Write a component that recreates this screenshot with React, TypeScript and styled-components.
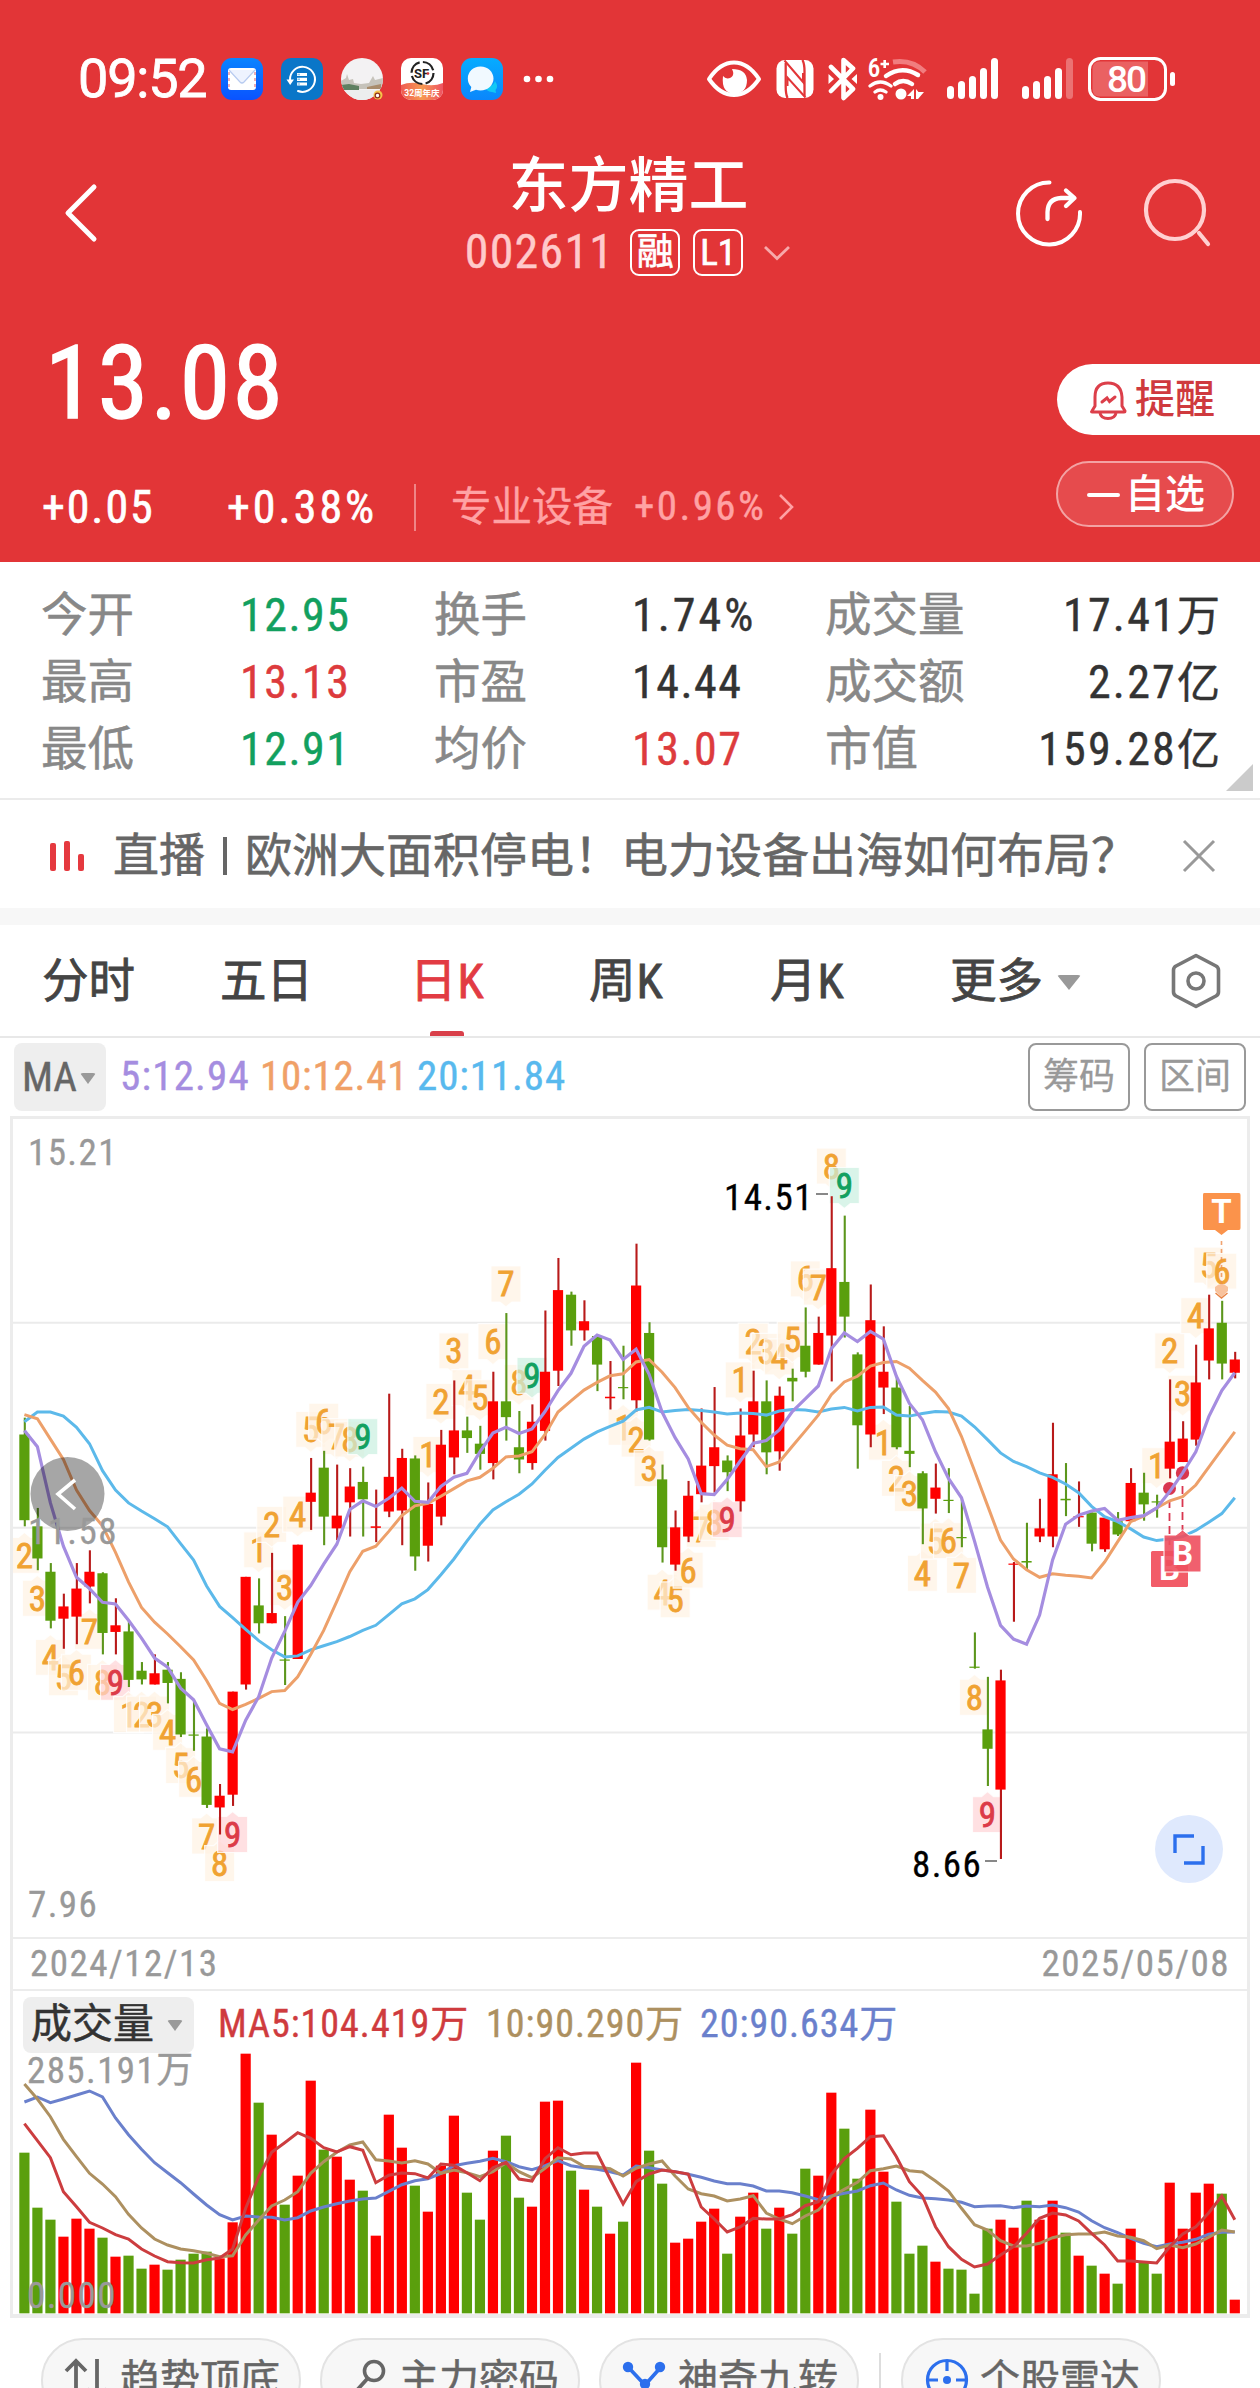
import React from "react";
import styled, { createGlobalStyle } from "styled-components";

const FONT = '"Roboto Condensed", Roboto, "Noto Sans CJK SC", sans-serif';
const RED = "#e23537";

const GlobalStyle = createGlobalStyle`
  * { box-sizing: border-box; }
  body { margin: 0; background: #fff; }
`;

const Screen = styled.div`
  width: 1260px;
  height: 2388px;
  overflow: hidden;
  background: #fff;
  color: #333;
  font-family: ${FONT};
  font-stretch: 75%;
  white-space: nowrap;
`;

/* ---------- shared text ---------- */
const Txt = styled.span<{
  $size: number;
  $color?: string;
  $ls?: number;
  $weight?: number;
  $stroke?: number;
  $ml?: number;
  $w?: number;
}>`
  font-size: ${(p) => p.$size}px;
  line-height: 1.1;
  color: ${(p) => p.$color ?? "inherit"};
  letter-spacing: ${(p) => p.$ls ?? 0}px;
  font-weight: ${(p) => p.$weight ?? 400};
  -webkit-text-stroke: ${(p) => p.$stroke ?? 0}px currentColor;
  margin-left: ${(p) => p.$ml ?? 0}px;
  ${(p) => (p.$w ? `width: ${p.$w}px;` : "")}
  flex: none;
`;

/* ---------- header ---------- */
const Header = styled.header`
  height: 562px;
  background: ${RED};
  color: #fff;
`;

const StatusBar = styled.div`
  height: 146px;
  padding: 12px 84px 0 78px;
  display: flex;
  align-items: center;
  justify-content: space-between;
`;

const StatusGroup = styled.div<{ $gap: number }>`
  display: flex;
  align-items: center;
  gap: ${(p) => p.$gap}px;
`;

const Clock = styled.span`
  font: 400 54px/64px Roboto, sans-serif;
  font-stretch: 100%;
  width: 125px;
  letter-spacing: -1.2px;
  -webkit-text-stroke: 0.8px #fff;
`;

const AppIcon = styled.svg`
  width: 42px;
  height: 42px;
  display: block;
`;

const StatusText = styled.text<{ $size: number; $weight: number }>`
  font-family: Roboto, "Noto Sans CJK SC", sans-serif;
  font-size: ${(p) => p.$size}px;
  font-weight: ${(p) => p.$weight};
  font-stretch: 100%;
`;

const NavBar = styled.nav`
  height: 134px;
  padding: 0 48px 0 62px;
  display: grid;
  grid-template-columns: 242px 1fr 256px;
  align-items: center;
`;

const TitleColumn = styled.div`
  height: 134px;
  display: flex;
  flex-direction: column;
  align-items: center;
  padding-top: 8px;
`;

const Title = styled.h1`
  margin: 0 0 9px 0;
  font-size: 60px;
  line-height: 66px;
  font-weight: 500;
  padding-right: 3px;
`;

const SubTitle = styled.div`
  height: 47px;
  display: flex;
  align-items: center;
  padding-right: 4px;
`;

const Tag = styled.span<{ $ml: number }>`
  width: 50px;
  height: 47px;
  margin-left: ${(p) => p.$ml}px;
  border: 2.5px solid #fff;
  border-radius: 9px;
  display: flex;
  align-items: center;
  justify-content: center;
  font-size: 37px;
  line-height: 1;
  -webkit-text-stroke: 0.7px currentColor;
`;

const NavActions = styled.div`
  display: flex;
  justify-content: flex-end;
  gap: 58px;
`;

const Quote = styled.div`
  height: 282px;
  display: flex;
  justify-content: space-between;
`;

const QuoteLeft = styled.div`
  padding: 53px 0 0 42px;
`;

const Price = styled.div`
  height: 100px;
  padding-left: 3px;
  font-size: 102px;
  line-height: 101px;
  letter-spacing: 2.4px;
  -webkit-text-stroke: 1.6px #fff;
`;

const ChangeRow = styled.div`
  height: 48px;
  margin-top: 50px;
  display: flex;
  align-items: center;
`;

const Divider = styled.i<{ $h: number; $color: string; $ml: number; $mr: number; $w?: number }>`
  width: ${(p) => p.$w ?? 2}px;
  height: ${(p) => p.$h}px;
  background: ${(p) => p.$color};
  margin-left: ${(p) => p.$ml}px;
  margin-right: ${(p) => p.$mr}px;
  flex: none;
`;

const QuoteRight = styled.div`
  padding-top: 84px;
  display: flex;
  flex-direction: column;
  align-items: flex-end;
  gap: 26px;
`;

const RemindPill = styled.button`
  width: 203px;
  height: 71px;
  padding: 0 0 0 32px;
  border: 0;
  border-radius: 36px 0 0 36px;
  background: #fff;
  color: #cf3a3e;
  display: flex;
  align-items: center;
  gap: 8px;
  font: 500 40px/1.1 ${FONT};
`;

const WatchPill = styled.button`
  width: 178px;
  height: 66px;
  margin-right: 26px;
  padding: 2px 0 0 29px;
  border: 2px solid #f3a3a4;
  border-radius: 33px;
  background: #e64b4d;
  color: #fff;
  display: flex;
  align-items: center;
  gap: 5px;
  font: 500 40px/1.1 ${FONT};
`;

const Dash = styled.i`
  width: 33px;
  height: 4px;
  border-radius: 2px;
  background: #fff;
`;

/* ---------- stats ---------- */
const Stats = styled.section`
  position: relative;
  height: 238px;
  padding: 20px 40px 0 41px;
  border-bottom: 2px solid #ebebeb;
  display: grid;
  grid-template-columns: 199px 194px 198px 193px 145px 1fr;
  grid-auto-rows: 67px;
  align-items: center;
`;

const StatLabel = styled.span`
  font-size: 46.5px;
  line-height: 67px;
  color: #888;
  -webkit-text-stroke: 0.5px currentColor;
`;

const StatValue = styled.span<{ $color?: string; $right?: boolean; $ls?: number }>`
  font-size: 46px;
  line-height: 67px;
  letter-spacing: ${(p) => p.$ls ?? 1.5}px;
  color: ${(p) => p.$color ?? "#333"};
  text-align: ${(p) => (p.$right ? "right" : "left")};
  -webkit-text-stroke: 0.4px currentColor;
`;

const Unit = styled.span`
  font-size: 43px;
  letter-spacing: 0;
`;

const Corner = styled.i`
  position: absolute;
  right: 7px;
  bottom: 7px;
  border-left: 27px solid transparent;
  border-bottom: 27px solid #cbcbcb;
`;

/* ---------- notice ---------- */
const Notice = styled.section`
  height: 125px;
  padding: 3px 44px 0 50px;
  border-bottom: 17px solid #f7f7f7;
  display: flex;
  align-items: center;
  color: #666;
`;

const Bars = styled.div`
  width: 63px;
  height: 30px;
  display: flex;
  align-items: flex-end;
  gap: 8px;
`;

const Bar = styled.i<{ $h: number }>`
  width: 6px;
  height: ${(p) => p.$h}px;
  border-radius: 2px;
  background: #e5393f;
`;

const Grow = styled.i`
  flex: 1;
`;

/* ---------- tabs ---------- */
const Tabs = styled.nav`
  height: 113px;
  border-bottom: 2px solid #e8e8e8;
  padding: 0 39px 0 42px;
  display: grid;
  grid-template-columns: 178px 190px 179px 181px 180px 1fr 50px;
  align-items: center;
`;

const Tab = styled.div<{ $active?: boolean }>`
  position: relative;
  height: 111px;
  width: max-content;
  display: flex;
  align-items: center;
  padding-top: 3px;
  font-size: 46.5px;
  line-height: 1.1;
  color: ${(p) => (p.$active ? "#e23b43" : "#444")};
  -webkit-text-stroke: 0.8px currentColor;
  &::after {
    content: "";
    display: ${(p) => (p.$active ? "block" : "none")};
    position: absolute;
    left: 50%;
    bottom: 0;
    width: 34px;
    height: 5px;
    margin-left: -17px;
    border-radius: 3px 3px 0 0;
    background: #d9404a;
  }
`;

const Kay = styled.span`
  margin-left: 1px;
  font-size: 48px;
  letter-spacing: 1px;
`;

const Caret = styled.i<{ $w: number; $h: number; $ml: number }>`
  border-left: ${(p) => p.$w / 2}px solid transparent;
  border-right: ${(p) => p.$w / 2}px solid transparent;
  border-top: ${(p) => p.$h}px solid #999;
  border-radius: 3px;
  margin-left: ${(p) => p.$ml}px;
`;

/* ---------- indicator row ---------- */
const IndicatorRow = styled.div`
  height: 78px;
  padding: 5px 14px 5px 14px;
  display: flex;
  align-items: center;
`;

const MaPicker = styled.div`
  width: 92px;
  height: 68px;
  padding: 2px 0 0 8px;
  border-radius: 8px;
  background: #eee;
  color: #666;
  display: flex;
  align-items: center;
`;

const OutlineButton = styled.button`
  width: 102px;
  height: 68px;
  margin-left: 14px;
  padding: 2px 0 0;
  border: 2px solid #999;
  border-radius: 8px;
  background: #fff;
  color: #999;
  font: 400 36px/1.1 ${FONT};
  -webkit-text-stroke: 0.3px currentColor;
`;

/* ---------- chart panels ---------- */
const Panel = styled.section`
  width: 1240px;
  margin-left: 10px;
  border: 3px solid #ececec;
  border-bottom-width: 4px;
`;

const ChartSvg = styled.svg`
  display: block;
  width: 1234px;
`;

const DateRow = styled.div`
  height: 54px;
  padding: 0 17px 0 17px;
  border-top: 2px solid #ececec;
  border-bottom: 2px solid #ececec;
  display: flex;
  align-items: center;
  justify-content: space-between;
  color: #999;
`;

const VolumeHeader = styled.div`
  height: 62px;
  padding: 6px 0 0 10px;
  display: flex;
  align-items: center;
`;

const VolumePicker = styled.div`
  width: 171px;
  height: 56px;
  margin-right: 24px;
  padding-left: 8px;
  border-radius: 8px;
  background: #eee;
  display: flex;
  align-items: center;
`;

/* ---------- bottom tools ---------- */
const Tools = styled.div`
  display: flex;
  align-items: flex-start;
  padding: 20px 0 0 41px;
  height: 110px;
`;

const Tool = styled.div<{ $ml: number }>`
  width: 260px;
  height: 84px;
  margin-left: ${(p) => p.$ml}px;
  padding-left: 21px;
  border: 2px solid #e3e3e3;
  border-radius: 42px;
  background: #f7f7f7;
  color: #666;
  display: flex;
  align-items: center;
  gap: 10px;
  flex: none;
`;

/* ---------- data ---------- */
type Dir = "R" | "G";
type Candle = [Dir, number, number, number, number];

/* colour, high, top of body, bottom of body, low */
const CANDLES: Candle[] = [
  ["G", 603, 636, 804, 816], ["G", 780, 816, 879, 902], ["G", 888, 905, 1001, 1016], ["R", 948, 973, 997, 1056],
  ["R", 888, 938, 993, 1047], ["R", 863, 905, 934, 967], ["G", 906, 908, 1025, 1067], ["R", 957, 1010, 1023, 1067],
  ["G", 1001, 1022, 1117, 1131], ["G", 1082, 1099, 1116, 1126], ["R", 1067, 1104, 1126, 1126], ["G", 1082, 1097, 1123, 1163],
  ["G", 1102, 1115, 1224, 1229], ["G", 1156, 1224, 1226, 1256], ["G", 1212, 1228, 1362, 1368], ["R", 1321, 1344, 1367, 1420],
  ["R", 1140, 1140, 1342, 1364], ["R", 915, 915, 1126, 1136], ["G", 918, 971, 1006, 1026], ["R", 868, 986, 1006, 1006],
  ["G", 992, 1077, 1079, 1127], ["R", 852, 852, 1076, 1076], ["R", 682, 750, 768, 823], ["G", 668, 701, 797, 853],
  ["R", 695, 795, 820, 843], ["R", 702, 738, 769, 836], ["G", 699, 729, 763, 836], ["R", 744, 816, 819, 847],
  ["R", 556, 719, 787, 798], ["R", 664, 682, 785, 853], ["G", 677, 683, 875, 903], ["R", 730, 772, 854, 885],
  ["R", 627, 656, 797, 814], ["R", 530, 628, 681, 714], ["G", 601, 628, 643, 672], ["G", 619, 654, 674, 705],
  ["R", 513, 571, 692, 724], ["G", 398, 571, 602, 648], ["G", 590, 661, 685, 712], ["R", 577, 611, 692, 705],
  ["R", 393, 513, 629, 648], ["R", 290, 353, 511, 541], ["G", 356, 362, 432, 462], ["R", 373, 414, 432, 452],
  ["G", 443, 443, 499, 551], ["R", 492, 562, 565, 587], ["G", 462, 543, 545, 567], ["R", 262, 344, 569, 591],
  ["G", 416, 437, 646, 648], ["G", 695, 724, 857, 887], ["R", 785, 818, 891, 903], ["R", 727, 756, 836, 847],
  ["R", 585, 697, 753, 769], ["R", 543, 661, 698, 750], ["G", 677, 687, 710, 747], ["R", 585, 638, 767, 787],
  ["R", 511, 571, 636, 661], ["G", 530, 571, 671, 714], ["R", 542, 560, 669, 707], ["G", 507, 525, 532, 571],
  ["G", 387, 462, 513, 524], ["R", 405, 437, 499, 499], ["R", 169, 310, 442, 532], ["G", 207, 337, 405, 446],
  ["G", 475, 479, 618, 703], ["R", 342, 412, 636, 661], ["R", 424, 513, 544, 596], ["G", 522, 544, 661, 665],
  ["G", 580, 668, 674, 700], ["G", 708, 712, 781, 851], ["R", 693, 740, 762, 791], ["G", 702, 764, 766, 790],
  ["G", 762, 837, 839, 857], ["G", 1024, 1091, 1093, 1095], ["G", 1111, 1214, 1252, 1325], ["R", 1097, 1118, 1332, 1468],
  ["R", 886, 889, 891, 1003], ["G", 809, 884, 887, 901], ["R", 762, 820, 836, 847], ["R", 613, 714, 836, 857],
  ["G", 692, 762, 765, 796], ["R", 728, 796, 798, 817], ["G", 789, 789, 850, 865], ["R", 799, 799, 861, 866],
  ["G", 788, 806, 832, 835], ["R", 702, 731, 806, 806], ["G", 711, 750, 773, 805], ["G", 754, 767, 769, 799],
  ["R", 528, 650, 703, 722], ["R", 610, 644, 690, 690], ["R", 460, 534, 646, 658], ["R", 362, 428, 491, 528],
  ["G", 374, 417, 497, 528], ["R", 474, 489, 515, 526],
];

const MA5 = [628,660,770,855,916,938,965,968,1000,1035,1074,1092,1133,1156,1205,1252,1258,1196,1150,1074,1022,965,932,890,851,783,766,777,761,741,767,769,738,720,712,670,633,622,634,625,591,550,516,463,441,451,489,469,518,592,642,684,752,754,724,688,653,648,627,591,566,541,468,437,454,434,449,522,575,607,670,722,760,845,935,1010,1037,1047,990,882,812,794,786,781,804,799,795,780,748,711,670,601,550,515];
const MA10 = [597,605,645,685,745,785,815,867,925,975,1004,1027,1052,1078,1118,1163,1175,1165,1153,1140,1138,1111,1067,1020,963,905,865,855,826,795,776,771,757,742,727,720,702,680,678,670,636,592,570,549,534,521,517,494,489,514,544,583,612,637,657,664,666,699,690,659,629,598,558,533,522,502,495,493,506,530,553,585,640,707,775,843,880,901,916,909,912,914,917,886,846,807,796,780,766,758,735,700,665,631];
const MA20 = [611,592,592,600,622,654,707,745,770,786,801,817,850,882,933,973,995,1018,1040,1058,1072,1070,1058,1050,1042,1032,1020,1010,989,968,958,940,911,880,845,812,784,768,753,733,706,681,663,645,631,620,610,588,583,592,589,587,589,592,596,594,595,598,590,587,588,592,586,583,590,583,582,598,600,595,591,592,600,621,646,672,689,699,711,720,733,750,777,797,807,821,837,844,841,836,824,808,791,760];

const VOLUME = [758,923,959,1010,956,986,1013,1070,1067,1106,1094,1109,1079,1061,1055,1075,967,461,608,704,914,827,542,749,770,839,872,1007,644,743,857,935,797,647,878,959,752,707,893,920,605,602,812,869,920,1001,965,488,752,851,1028,1016,965,926,1061,950,878,986,923,1001,806,827,578,686,836,629,815,905,1061,1037,1085,1106,1109,1181,986,959,983,902,959,902,998,1067,1097,1121,1151,986,1088,1121,848,986,878,851,881,1199];
const VMA5 = [671,722,773,875,920,967,984,1004,1017,1047,1068,1085,1088,1089,1079,1074,1047,925,830,757,728,698,715,743,756,740,751,848,826,819,821,834,792,796,818,842,803,787,837,843,776,743,764,759,759,837,912,845,822,810,815,822,921,957,996,981,955,957,957,944,917,905,823,776,745,710,707,770,845,888,980,1040,1078,1101,1092,1065,1040,1000,955,939,945,963,1000,1035,1083,1083,1086,1089,1040,1002,980,938,888,959];
const VMA10 = [552,597,650,718,770,820,852,890,943,984,1017,1035,1047,1052,1060,1070,1067,1005,960,918,900,875,820,785,757,735,726,779,783,789,782,792,820,810,818,830,815,788,815,833,805,773,777,799,801,806,828,805,792,783,828,867,881,888,903,897,887,939,957,971,948,930,890,868,847,812,806,798,812,816,843,873,925,974,990,1022,1038,1038,1030,1013,1004,1002,1002,996,1008,1012,1022,1046,1035,1043,1032,1012,990,996];
const VMA20 = [606,591,608,597,585,573,591,654,704,748,788,818,848,882,915,944,960,948,951,952,960,953,933,921,911,903,897,894,874,854,842,836,820,797,790,784,775,785,800,809,797,782,797,803,808,815,825,798,803,810,815,823,832,843,851,851,858,873,873,878,888,899,888,880,873,857,849,870,886,894,896,900,907,920,918,917,923,918,920,915,923,936,962,983,998,1015,1030,1040,1032,1027,1018,1003,997,996];

/* index, digit, centre, whether it hangs below the candle */
const TURNS: [number, number, number, boolean][] = [
  [0, 2, 873, true], [1, 3, 957, true], [2, 4, 1073, true], [3, 5, 1113, true], [4, 6, 1102, true], [5, 7, 1022, true],
  [6, 8, 1122, true], [7, 9, 1122, true], [8, 1, 1185, true], [9, 2, 1184, true], [10, 3, 1184, true], [11, 4, 1220, true],
  [12, 5, 1285, true], [13, 6, 1312, true], [14, 7, 1423, true], [15, 8, 1477, true], [16, 9, 1420, true],
  [18, 1, 862, false], [19, 2, 812, false], [20, 3, 936, false], [21, 4, 792, false], [22, 5, 626, false],
  [23, 6, 610, false], [24, 7, 640, false], [25, 8, 645, false], [26, 9, 640, false],
  [31, 1, 675, false], [32, 2, 571, false], [33, 3, 472, false], [34, 4, 544, false], [35, 5, 564, false],
  [36, 6, 454, false], [37, 7, 341, false], [38, 8, 534, false], [39, 9, 520, false],
  [46, 1, 622, true], [47, 2, 645, true], [48, 3, 703, true], [49, 4, 945, true], [50, 5, 960, true],
  [51, 6, 902, true], [52, 7, 822, true], [53, 8, 808, true], [54, 9, 803, true],
  [55, 1, 529, false], [56, 2, 453, false], [57, 3, 473, false], [58, 4, 484, false], [59, 5, 450, false],
  [60, 6, 331, false], [61, 7, 347, false], [62, 8, 110, false], [63, 9, 148, false],
  [66, 1, 651, true], [67, 2, 722, true], [68, 3, 752, true], [69, 4, 908, true], [70, 5, 845, true],
  [71, 6, 844, true], [72, 7, 912, true], [73, 8, 1151, true], [74, 9, 1381, true],
  [87, 1, 697, false], [88, 2, 472, false], [89, 3, 555, false], [90, 4, 403, false], [91, 5, 304, false], [92, 6, 316, false],
];

const X = (i: number) => 24.4 + i * 13.015;
const PY = (v: number) => 1110 + v / 1.96;
const VY = (v: number) => 1900 + v / 3;
const points = (data: number[], y: (v: number) => number) =>
  data.map((v, i) => `${X(i).toFixed(1)},${y(v).toFixed(1)}`).join(" ");

const BODY = { R: "#ff0000", G: "#5a9f0d" };
const WICK = { R: "#b81a1a", G: "#5c961c" };

const AxisText = styled.text<{ $color?: string }>`
  font: 400 37px ${FONT};
  font-stretch: 75%;
  fill: ${(p) => p.$color ?? "#999"};
  stroke: ${(p) => p.$color ?? "#999"};
  stroke-width: 0.3px;
  letter-spacing: 1.4px;
`;

const TurnText = styled.text`
  font: 400 35px ${FONT};
  font-stretch: 75%;
  text-anchor: middle;
`;

const MarkText = styled.text`
  font: 700 33px Roboto, sans-serif;
  font-stretch: 100%;
  text-anchor: middle;
  fill: #fff;
`;

function Turn({ i, n, v, below }: { i: number; n: number; v: number; below: boolean }) {
  const x = X(i);
  const y = PY(v);
  const [fill, ink] = n === 9 ? (below ? ["#ffd3d6", "#dc3b48"] : ["#c9efdf", "#12a05f"]) : ["#fff2e2", "#f0a232"];
  const l = x - 15;
  const r = x + 15;
  const t = y - 18;
  const b = y + 18;
  const shape = below
    ? `M${l} ${t}H${x - 6}L${x} ${t - 5}L${x + 6} ${t}H${r}V${b}H${l}Z`
    : `M${l} ${t}H${r}V${b}H${x + 6}L${x} ${b + 5}L${x - 6} ${b}H${l}Z`;
  return (
    <g>
      <path d={shape} fill={fill} fillOpacity={0.7} stroke="#fff" strokeWidth={1.2} strokeOpacity={0.8} />
      <TurnText x={x} y={y + 12.5} fill={ink} stroke={ink} strokeWidth={0.8}>{n}</TurnText>
    </g>
  );
}

function PriceChart() {
  return (
    <ChartSvg height={818} viewBox="13 1119 1234 818">
      {[1322.8, 1527.8, 1732.6].map((y) => (
        <path key={y} d={`M13 ${y}H1247`} stroke="#ebebeb" strokeWidth={2} />
      ))}
      {TURNS.map(([i, n, v, below]) => (
        <Turn key={i} i={i} n={n} v={v} below={below} />
      ))}
      {CANDLES.map(([c, h, t, b, l], i) => (
        <g key={i}>
          <path d={`M${X(i) + 0.4} ${PY(h)}V${PY(l)}`} stroke={WICK[c]} strokeWidth={2.1} />
          <rect x={X(i) - 5.1} y={PY(t)} width={10.2} height={Math.max(1.2, (b - t) / 1.96)} fill={BODY[c]} />
        </g>
      ))}

      <g stroke="#d9364f" strokeWidth={1.8} strokeDasharray="8 5">
        <path d="M1169.5 1500V1545M1182.5 1486V1532" />
      </g>
      <path d="M1221.5 1241V1287" stroke="#ee8d4e" strokeWidth={1.6} strokeDasharray="4 4" strokeOpacity={0.8} />
      <path d="M1215 1287Q1221.5 1281 1228 1287V1291L1221.5 1297L1215 1291Z" fill="#f8c29c" />
      <path d="M1215.5 1293L1221.5 1298L1227.5 1293" fill="none" stroke="#e88547" strokeWidth={1.5} />
      <circle cx={1169.5} cy={1488.5} r={6.5} fill="#d9364f" />
      <circle cx={1182.5} cy={1473} r={6.7} fill="#d9364f" />

      <polyline points={points(MA20, PY)} fill="none" stroke="#5cb9ea" strokeWidth={3} />
      <polyline points={points(MA10, PY)} fill="none" stroke="#eda06a" strokeWidth={3} />
      <polyline points={points(MA5, PY)} fill="none" stroke="#a58de0" strokeWidth={3.2} />

      <path d="M1204 1193H1239Q1240.5 1193 1240.5 1195V1228Q1240.5 1230 1239 1230H1228L1221.5 1235L1215 1230H1204Q1203 1230 1203 1228V1195Q1203 1193 1204 1193Z" fill="#fb934b" />
      <MarkText x={1221.5} y={1223}>T</MarkText>
      <rect x={1151} y={1551} width={37} height={36} rx={1.5} fill="#f25c68" />
      <MarkText x={1169.5} y={1580}>B</MarkText>
      <path d="M1164 1535H1176L1182.5 1530L1189 1535H1201V1572H1164Z" fill="#ee4f5e" fillOpacity={0.9} stroke="#fff" strokeWidth={1} />
      <MarkText x={1182.5} y={1565}>B</MarkText>

      <circle cx={67.5} cy={1494} r={37} fill="#000" fillOpacity={0.35} />
      <path d="M75 1480L58 1494L75 1509" fill="none" stroke="#fff" strokeWidth={3.6} />
      <AxisText x={28} y={1165}>15.21</AxisText>
      <AxisText x={28} y={1544}>11.58</AxisText>
      <AxisText x={28} y={1916.5}>7.96</AxisText>
      <AxisText x={724} y={1210} $color="#000">14.51</AxisText>
      <path d="M816 1194H828M985 1861H997" stroke="#888" strokeWidth={2} />
      <AxisText x={912} y={1876.5} $color="#000">8.66</AxisText>

      <circle cx={1189} cy={1849} r={34} fill="#dfe9fd" />
      <path d="M1194 1836H1175V1853M1184 1863H1203V1846" fill="none" stroke="#2c6fed" strokeWidth={3.4} />
    </ChartSvg>
  );
}

function VolumeChart() {
  return (
    <ChartSvg height={261} viewBox="13 2053 1234 261">
      {VOLUME.map((v, i) => (
        <rect key={i} x={X(i) - 5.1} y={VY(v)} width={10.2} height={(1240 - v) / 3} fill={BODY[CANDLES[i][0]]} />
      ))}
      <polyline points={points(VMA20, VY)} fill="none" stroke="#6a80cc" strokeWidth={3} />
      <polyline points={points(VMA10, VY)} fill="none" stroke="#ad9060" strokeWidth={3} />
      <polyline points={points(VMA5, VY)} fill="none" stroke="#cc3d3f" strokeWidth={3} />
      <AxisText x={27} y={2083}>285.191万</AxisText>
      <AxisText x={27} y={2308}>0.000</AxisText>
    </ChartSvg>
  );
}

function AppIcons() {
  return (
    <>
      <AppIcon viewBox="0 0 42 42">
        <defs>
          <linearGradient id="mail" x1="0" y1="0" x2="0" y2="1"><stop stopColor="#0a84ff" /><stop offset="1" stopColor="#0a53ff" /></linearGradient>
        </defs>
        <rect width="42" height="42" rx="11" fill="url(#mail)" />
        <rect x="7" y="10" width="28" height="22" rx="3" fill="#fff" />
        <path d="M8 12L19 24Q21 26 23 24L34 12" fill="#eef3ff" stroke="#b8cbf0" strokeWidth="1.2" />
        <path d="M8 14V29M34 14V29" stroke="#e58b9a" strokeWidth="1.4" strokeDasharray="3 3" />
      </AppIcon>
      <AppIcon viewBox="0 0 42 42">
        <rect width="42" height="42" rx="10" fill="#0a76c8" />
        <path d="M9 22A12.5 12.5 0 1 1 17 33" fill="none" stroke="#fff" strokeWidth="2" strokeLinecap="round" />
        <path d="M5.5 21.5H13L9.2 27Z" fill="#fff" />
        <path d="M16 16.5H26M16 21.3H26M16 26H26" stroke="#fff" strokeWidth="3.2" />
        <path d="M16.5 16.5H19M16.5 21.3H19M16.5 26H19" stroke="#8fc7ee" strokeWidth="1.6" />
      </AppIcon>
      <AppIcon viewBox="0 0 42 42">
        <defs><clipPath id="avatar"><circle cx="21" cy="21" r="21" /></clipPath></defs>
        <g clipPath="url(#avatar)">
          <rect width="42" height="42" fill="#f3f2f3" />
          <path d="M0 23L5 20L6 16L8 22L12 21L13 25L20 26L28 25L32 18L34 22L42 20V31H0Z" fill="#c6c3bb" />
          <path d="M0 27L8 26L18 28V32H0Z" fill="#5f8061" />
          <path d="M26 29L40 26V31H26Z" fill="#a98c6c" />
          <rect y="32" width="42" height="10" fill="#eceeee" />
        </g>
        <circle cx="37" cy="37" r="4.5" fill="#f6c24a" />
        <circle cx="36.5" cy="37.5" r="2.3" fill="#fff" stroke="#8c2f1c" strokeWidth="1.2" />
      </AppIcon>
      <AppIcon viewBox="0 0 42 42">
        <defs>
          <clipPath id="sf"><rect width="42" height="42" rx="10" /></clipPath>
          <linearGradient id="fest"><stop stopColor="#ef5a52" /><stop offset="0.5" stopColor="#f79a52" /><stop offset="1" stopColor="#ee5262" /></linearGradient>
        </defs>
        <g clipPath="url(#sf)">
          <rect width="42" height="42" fill="#fff" />
          <path d="M0 27Q10 23 21 26T42 25V42H0Z" fill="url(#fest)" />
        </g>
        <circle cx="21.5" cy="15" r="11" fill="#fff" stroke="#222" strokeWidth="2.2" strokeDasharray="14 3.3" />
        <StatusText x="20.5" y="20" textAnchor="middle" $weight={700} $size={13} fill="#222">SF</StatusText>
        <circle cx="27" cy="15.5" r="1.3" fill="#d33" />
        <StatusText x="21" y="38" textAnchor="middle" $weight={700} $size={8.5} fill="#fff">32周年庆</StatusText>
      </AppIcon>
      <AppIcon viewBox="0 0 42 42">
        <defs>
          <linearGradient id="chat" x1="0" y1="0" x2="0" y2="1"><stop stopColor="#06acff" /><stop offset="1" stopColor="#0b86fb" /></linearGradient>
        </defs>
        <rect width="42" height="42" rx="11" fill="url(#chat)" />
        <path d="M24 30Q33 28 34 23Q38 29 34.5 32L35 35L31 34Q27 34 24 30Z" fill="#12c8f5" />
        <path d="M19.5 8.5C27 8.5 32.5 14 32.5 20.5S27 32.5 19.5 32.5Q17 32.5 15 31.8L9 34L10.3 29Q6.8 25.5 6.8 20.5C6.8 14 12 8.5 19.5 8.5Z" fill="#f1f9ff" />
      </AppIcon>
    </>
  );
}

function Signal({ last = 1 }: { last?: number }) {
  const heights = [13, 18, 23, 31, 41];
  return (
    <svg width="51" height="42" viewBox="0 0 51 42">
      {heights.map((h, i) => (
        <rect key={i} x={i * 11} y={41 - h} width={7} height={h} rx={3.5} fill="#fff" fillOpacity={i === 4 ? last : 1} />
      ))}
    </svg>
  );
}

const Row = styled.div<{ $gap?: number; $ml?: number }>`
  display: flex;
  align-items: center;
  gap: ${(p) => p.$gap ?? 0}px;
  margin-left: ${(p) => p.$ml ?? 0}px;
`;

const Glyph = styled.svg<{ $ml?: number }>`
  display: block;
  flex: none;
  margin-left: ${(p) => p.$ml ?? 0}px;
`;

function StatusIcons() {
  return (
    <Row>
      <Glyph width="56" height="40" viewBox="0 0 56 40">
        <path d="M3 20Q14 3.5 28 3.5T53 20Q42 36 28 36T3 20Z" fill="none" stroke="#fff" strokeWidth="4" strokeLinejoin="round" />
        <path d="M17 17Q20 21 25 18.5Q29 16 26 10Q40 10 41 21Q41 34 28.500 35Q15 34 17 17Z" fill="#fff" />
      </Glyph>
      <Glyph $ml={14} width="38" height="40" viewBox="0 0 38 40">
        <rect x="0.5" y="1" width="37" height="38" rx="8.5" fill="#fff" />
        <path d="M8.5 1.5L27 23V14M29.5 38.5L11.5 18.5V27" fill="none" stroke={RED} strokeWidth="2" />
        <path d="M26.5 1Q28.5 5 28.5 12V37M11.5 39Q9.7 35 9.7 28V4" fill="none" stroke={RED} strokeWidth="2.3" />
      </Glyph>
      <Glyph $ml={14} width="30" height="44" viewBox="0 0 30 44">
        <path d="M3 10L25 32L15.5 41V3L25 11.5L3 34" fill="none" stroke="#fff" strokeWidth="4.6" strokeLinejoin="round" strokeLinecap="round" />
        <path d="M0.5 17L6 22L0.5 27ZM29 17L23.5 22L29 27Z" fill="#fff" />
      </Glyph>
      <Glyph $ml={10} width="60" height="44" viewBox="0 0 60 44">
        <StatusText x="0" y="20" $weight={700} $size={25} fill="#fff" textLength="12" lengthAdjust="spacingAndGlyphs">6</StatusText>
        <path d="M12.5 7H21M16.7 3V11" stroke="#fff" strokeWidth="2.6" />
        <path d="M25 5Q44 2 57 15" fill="none" stroke="#f17d7f" strokeWidth="5" />
        <path d="M18 19Q34 8 50 18" fill="none" stroke="#fff" strokeWidth="4.5" strokeLinecap="round" />
        <path d="M27 27Q35 21 44 27" fill="none" stroke="#fff" strokeWidth="4.5" strokeLinecap="round" />
        <path d="M2 29Q12 21 23 29M7 35Q12 31 18 35" fill="none" stroke="#fff" strokeWidth="3.2" strokeLinecap="round" />
        <circle cx="12.5" cy="40" r="3" fill="#fff" />
        <circle cx="33" cy="37" r="5.5" fill="#fff" />
        <path d="M39 39L46 32V42H43V39ZM48 42V32L50.5 35H56L50 42Z" fill="#fff" />
      </Glyph>
      <Row $ml={19} $gap={24}>
        <Signal />
        <Signal last={0.3} />
      </Row>
      <Glyph $ml={15} width="88" height="44" viewBox="0 0 88 44">
        <rect x="1.5" y="1.5" width="76" height="41" rx="11" fill="none" stroke="#fff" strokeWidth="3" />
        <path d="M12 4.500H60V39.500H12Q4.500 39.500 4.500 32V12Q4.500 4.500 12 4.500Z" fill="#ea6162" />
        <StatusText x="39" y="35" textAnchor="middle" $weight={500} $size={37} fill="#fff" textLength="40">80</StatusText>
        <rect x="82" y="15" width="5" height="14" rx="2.5" fill="#fff" />
      </Glyph>
    </Row>
  );
}

export default function App() {
  return (
    <Screen>
      <GlobalStyle />
      <Header>
        <StatusBar>
          <StatusGroup $gap={18}>
            <Clock>09:52</Clock>
            <AppIcons />
            <Glyph width="34" height="8" viewBox="0 0 34 8">
              <circle cx="6" cy="4" r="3.3" fill="#fff" />
              <circle cx="17.5" cy="4" r="3.3" fill="#fff" />
              <circle cx="29" cy="4" r="3.3" fill="#fff" />
            </Glyph>
          </StatusGroup>
          <StatusIcons />
        </StatusBar>

        <NavBar>
          <Glyph width="40" height="60" viewBox="0 0 40 60">
            <path d="M32 4L6 30L32 56" fill="none" stroke="#fff" strokeWidth="5" strokeLinecap="round" strokeLinejoin="round" />
          </Glyph>
          <TitleColumn>
            <Title>东方精工</Title>
            <SubTitle>
              <Txt $size={48} $color="#ffc9ca" $ls={1.2} $stroke={0.4}>002611</Txt>
              <Tag $ml={16}>融</Tag>
              <Tag $ml={13}>L1</Tag>
              <Glyph $ml={20} width="28" height="16" viewBox="0 0 28 16">
                <path d="M2 2L14 13.500L26 2" fill="none" stroke="#f7a9aa" strokeWidth="2.8" />
              </Glyph>
            </SubTitle>
          </TitleColumn>
          <NavActions>
            <svg width="70" height="70" viewBox="0 0 70 70">
              <path d="M35.5 4.5A31 31 0 1 0 66 34" fill="none" stroke="#fff" strokeWidth="4" strokeLinecap="round" />
              <path d="M33.5 41V34Q34 20.5 47 20H60M52 12.5L60.5 20L52 28" fill="none" stroke="#fff" strokeWidth="4.3" strokeLinecap="round" strokeLinejoin="round" />
            </svg>
            <svg width="70" height="70" viewBox="0 0 70 70">
              <circle cx="33" cy="32" r="29" fill="none" stroke="#ffd0d1" strokeWidth="4.2" />
              <path d="M57 55L66 66" stroke="#ffd0d1" strokeWidth="4.2" strokeLinecap="round" />
            </svg>
          </NavActions>
        </NavBar>

        <Quote>
          <QuoteLeft>
            <Price>13.08</Price>
            <ChangeRow>
              <Txt $size={46} $ls={1.9} $stroke={0.6} $w={185}>+0.05</Txt>
              <Txt $size={46} $ls={3} $stroke={0.6} $w={152}>+0.38%</Txt>
              <Divider $h={47} $color="#ef8587" $ml={35} $mr={35} />
              <Txt $size={40.5} $color="#ffa2a4" $stroke={0.4}>专业设备</Txt>
              <Txt $size={41} $color="#ffa2a4" $ls={2.4} $ml={21} $stroke={0.4}>+0.96%</Txt>
              <Glyph $ml={11} width="18" height="30" viewBox="0 0 18 30">
                <path d="M3 3L15 15L3 27" fill="none" stroke="#ffa2a4" strokeWidth="2.6" />
              </Glyph>
            </ChangeRow>
          </QuoteLeft>
          <QuoteRight>
            <RemindPill>
              <Glyph width="38" height="40" viewBox="0 0 38 40">
                <path d="M3 31L6 26V17Q6 3 19 3T33 17V26L36 31Q36 32 35 32H3Q2 32 3 31Z" fill="none" stroke="#dc3f4a" strokeWidth="3" strokeLinejoin="round" />
                <path d="M11 33Q12 38.500 19 38.500T27 33" fill="none" stroke="#dc3f4a" strokeWidth="3" />
                <path d="M13 22L18 18L20.5 21.5L26 17" fill="none" stroke="#dc3f4a" strokeWidth="3" strokeLinecap="round" />
              </Glyph>
              提醒
            </RemindPill>
            <WatchPill>
              <Dash />
              自选
            </WatchPill>
          </QuoteRight>
        </Quote>
      </Header>

      <Stats>
        <StatLabel>今开</StatLabel>
        <StatValue $color="#12a05f">12.95</StatValue>
        <StatLabel>换手</StatLabel>
        <StatValue $ls={3}>1.74%</StatValue>
        <StatLabel>成交量</StatLabel>
        <StatValue $right $ls={2.2}>17.41<Unit>万</Unit></StatValue>
        <StatLabel>最高</StatLabel>
        <StatValue $color="#dd3b3d">13.13</StatValue>
        <StatLabel>市盈</StatLabel>
        <StatValue>14.44</StatValue>
        <StatLabel>成交额</StatLabel>
        <StatValue $right $ls={2.2}>2.27<Unit>亿</Unit></StatValue>
        <StatLabel>最低</StatLabel>
        <StatValue $color="#12a05f">12.91</StatValue>
        <StatLabel>均价</StatLabel>
        <StatValue $color="#dd3b3d">13.07</StatValue>
        <StatLabel>市值</StatLabel>
        <StatValue $right $ls={2.2}>159.28<Unit>亿</Unit></StatValue>
        <Corner />
      </Stats>

      <Notice>
        <Bars>
          <Bar $h={28} />
          <Bar $h={30} />
          <Bar $h={17} />
        </Bars>
        <Txt $size={46} $stroke={0.6}>直播</Txt>
        <Divider $h={38} $color="#666" $ml={18} $mr={18} $w={4} />
        <Txt $size={47} $stroke={0.6}>欧洲大面积停电！电力设备出海如何布局？</Txt>
        <Grow />
        <svg width="34" height="34" viewBox="0 0 34 34">
          <path d="M2 2L32 32M32 2L2 32" stroke="#999" strokeWidth="3" />
        </svg>
      </Notice>

      <Tabs>
        <Tab>分时</Tab>
        <Tab>五日</Tab>
        <Tab $active>日<Kay>K</Kay></Tab>
        <Tab>周<Kay>K</Kay></Tab>
        <Tab>月<Kay>K</Kay></Tab>
        <Tab>更多<Caret $w={24} $h={15} $ml={14} /></Tab>
        <svg width="50" height="56" viewBox="0 0 50 56">
          <path d="M25 2.5L45 13Q47.5 14.5 47.5 17V39Q47.5 41.5 45 43L25 53.5L5 43Q2.5 41.5 2.5 39V17Q2.5 14.5 5 13Z" fill="none" stroke="#777" strokeWidth="3.6" strokeLinejoin="round" />
          <circle cx="25" cy="28" r="8" fill="none" stroke="#777" strokeWidth="3.6" />
        </svg>
      </Tabs>

      <IndicatorRow>
        <MaPicker>
          <Txt $size={41} $stroke={0.4}>MA</Txt>
          <Caret $w={16} $h={11} $ml={3} />
        </MaPicker>
        <Txt $size={41} $color="#a58de0" $ls={1.2} $stroke={0.4} $ml={14} $w={140}>5:12.94</Txt>
        <Txt $size={41} $color="#f0a067" $ls={0.8} $stroke={0.4} $w={157}>10:12.41</Txt>
        <Txt $size={41} $color="#58b9ee" $ls={0.9} $stroke={0.4}>20:11.84</Txt>
        <Grow />
        <OutlineButton>筹码</OutlineButton>
        <OutlineButton>区间</OutlineButton>
      </IndicatorRow>

      <Panel>
        <PriceChart />
        <DateRow>
          <Txt $size={37} $ls={1.5} $stroke={0.3}>2024/12/13</Txt>
          <Txt $size={37} $ls={1.5} $stroke={0.3}>2025/05/08</Txt>
        </DateRow>
        <VolumeHeader>
          <VolumePicker>
            <Txt $size={41} $stroke={0.5}>成交量</Txt>
            <Caret $w={16} $h={11} $ml={13} />
          </VolumePicker>
          <Txt $size={38} $color="#cf3b3e" $ls={1} $stroke={0.4} $w={268}>MA5:104.419万</Txt>
          <Txt $size={38} $color="#ad9060" $ls={1} $stroke={0.4} $w={214}>10:90.290万</Txt>
          <Txt $size={38} $color="#6a80cc" $ls={1} $stroke={0.4}>20:90.634万</Txt>
        </VolumeHeader>
        <VolumeChart />
      </Panel>

      <Tools>
        <Tool $ml={0}>
          <Glyph width="46" height="46" viewBox="0 0 46 46">
            <path d="M12 44V4M2 14L12 4L22 14M33 2V42M23 32L33 42L43 32" fill="none" stroke="#666" strokeWidth="3.8" />
          </Glyph>
          <Txt $size={40} $stroke={0.5}>趋势顶底</Txt>
        </Tool>
        <Tool $ml={19}>
          <Glyph width="46" height="46" viewBox="0 0 46 46">
            <circle cx="31" cy="14" r="9.5" fill="none" stroke="#666" strokeWidth="3.6" />
            <path d="M25 21L6 42M14 33L20 39" fill="none" stroke="#666" strokeWidth="3.8" />
          </Glyph>
          <Txt $size={40} $stroke={0.5}>主力密码</Txt>
        </Tool>
        <Tool $ml={19}>
          <Glyph width="46" height="46" viewBox="0 0 46 46">
            <path d="M6 10L23 28L39 10M23 28V42" fill="none" stroke="#2c6fed" strokeWidth="3.6" />
            <circle cx="6" cy="10" r="5.2" fill="#2c6fed" />
            <circle cx="38" cy="10" r="5.2" fill="#2c6fed" />
            <circle cx="23" cy="27" r="5.2" fill="#2c6fed" />
          </Glyph>
          <Txt $size={40} $stroke={0.5}>神奇九转</Txt>
        </Tool>
        <Divider $h={60} $color="#ddd" $ml={20} $mr={20} style={{ marginTop: 15 }} />
        <Tool $ml={0}>
          <Glyph width="46" height="46" viewBox="0 0 46 46">
            <circle cx="23" cy="23" r="19.5" fill="none" stroke="#2c6fed" strokeWidth="3.2" />
            <path d="M23 4V14M23 32V42M4 23H14M32 23H42" stroke="#2c6fed" strokeWidth="3.2" />
            <circle cx="23" cy="23" r="4" fill="#2c6fed" />
          </Glyph>
          <Txt $size={40} $stroke={0.5}>个股雷达</Txt>
        </Tool>
      </Tools>
    </Screen>
  );
}
